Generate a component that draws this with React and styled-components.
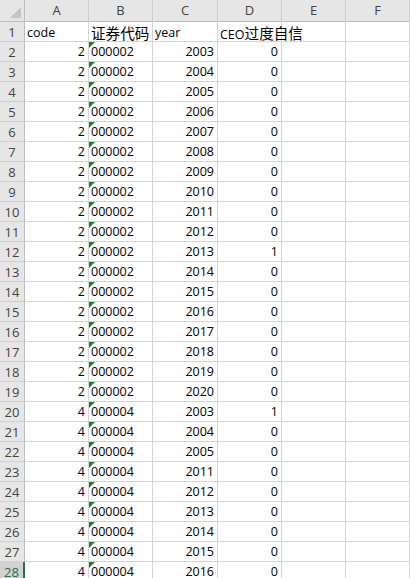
import React from "react";
import styled, { createGlobalStyle, css } from "styled-components";

const Global = createGlobalStyle`
  html, body { margin: 0; padding: 0; background: #fff; overflow: hidden; }
  #root { width: 410px; height: 578px; overflow: hidden; }
`;

const COLS = ["A", "B", "C", "D", "E", "F"];
const WIDTHS = "25px 64px 64px 65px 64px 64px 64px 64px";

const Sheet = styled.div`
  display: grid;
  grid-template-columns: ${WIDTHS};
  font-family: "Open Sans", "Noto Sans CJK SC", sans-serif;
  font-size: 12.5px;
  color: #000;
  width: 480px;
`;

const Corner = styled.div`
  position: relative;
  box-sizing: border-box;
  height: 22px;
  background: #e6e6e6;
  border-right: 1px solid #bdbdbd;
  border-bottom: 1px solid #bdbdbd;
  &::after {
    content: "";
    position: absolute;
    right: 3px;
    bottom: 3px;
    width: 0;
    height: 0;
    border-left: 11px solid transparent;
    border-bottom: 11px solid #c4c4c4;
  }
`;

const ColHead = styled.div`
  box-sizing: border-box;
  height: 22px;
  background: #e6e6e6;
  border-right: 1px solid #d0d0d0;
  border-bottom: 1px solid #bdbdbd;
  color: #444;
  text-align: center;
  line-height: 21px;
  font-size: 13px;
`;

const RowHead = styled.div`
  box-sizing: border-box;
  height: 20px;
  background: ${(p) => (p.$active ? "#d2d2d2" : "#e6e6e6")};
  border-right: ${(p) => (p.$active ? "2px solid #217346" : "1px solid #bdbdbd")};
  border-bottom: 1px solid #d0d0d0;
  color: ${(p) => (p.$active ? "#217346" : "#444")};
  text-align: center;
  line-height: 19px;
  font-size: 13px;
  padding-top: 1px;
`;

const Cell = styled.div`
  position: relative;
  box-sizing: border-box;
  height: 20px;
  border-right: 1px solid #d4d4d4;
  border-bottom: 1px solid #d4d4d4;
  padding: 0 2px 0 2px;
  line-height: 17px;
  padding-top: ${(p) => (p.$title ? "2px" : "1px")};
  white-space: nowrap;
  overflow: visible;
  text-align: ${(p) => (p.$num ? "right" : "left")};
  ${(p) =>
    p.$num &&
    css`
      padding-right: 3px;
    `}
  ${(p) =>
    p.$flag &&
    css`
      &::before {
        content: "";
        position: absolute;
        left: 0;
        top: 0;
        width: 0;
        height: 0;
        border-top: 6px solid #1f7f2a;
        border-right: 6px solid transparent;
      }
    `}
`;

const Cjk = styled.span`
  font-family: "Noto Sans CJK SC", sans-serif;
  font-size: 14.6px;
  line-height: 17px;
`;

const series = [
  ...Array.from({ length: 18 }, (_, i) => ({
    code: 2,
    sec: "000002",
    year: 2003 + i,
    ceo: 2003 + i === 2013 ? 1 : 0,
  })),
  ...[2003, 2004, 2005, 2011, 2012, 2013, 2014, 2015, 2016].map((y) => ({
    code: 4,
    sec: "000004",
    year: y,
    ceo: y === 2003 ? 1 : 0,
  })),
];

export default function App() {
  return (
    <>
      <Global />
      <Sheet>
        <Corner />
        {COLS.map((c) => (
          <ColHead key={c}>{c}</ColHead>
        ))}
        <ColHead />

        <RowHead>1</RowHead>
        <Cell $title>code</Cell>
        <Cell $title>
          <Cjk>证券代码</Cjk>
        </Cell>
        <Cell $title>year</Cell>
        <Cell $title>
          CEO<Cjk>过度自信</Cjk>
        </Cell>
        <Cell $title />
        <Cell $title />
        <Cell $title />

        {series.map((r, i) => (
          <React.Fragment key={i}>
            <RowHead $active={i + 2 === 28}>{i + 2}</RowHead>
            <Cell $num>{r.code}</Cell>
            <Cell $flag>{r.sec}</Cell>
            <Cell $num>{r.year}</Cell>
            <Cell $num>{r.ceo}</Cell>
            <Cell />
            <Cell />
            <Cell />
          </React.Fragment>
        ))}
      </Sheet>
    </>
  );
}
